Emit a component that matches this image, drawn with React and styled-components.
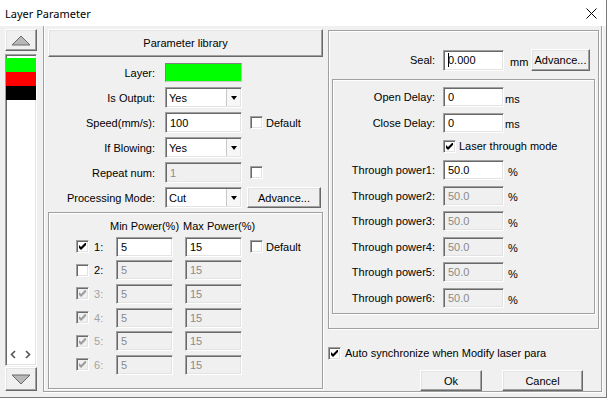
import React from "react";
import styled, { createGlobalStyle } from "styled-components";

const GlobalStyle = createGlobalStyle`
  html, body {
    margin: 0;
    padding: 0;
    background: #ffffff;
  }
  body {
    font-family: "Liberation Sans", Arial, sans-serif;
    font-size: 11px;
    color: #000;
  }
  * {
    box-sizing: border-box;
  }
`;

const Window = styled.div`
  width: 607px;
  height: 398px;
  background: #f0f0f0;
  border-right: 1px solid #7a7a7a;
  border-bottom: 1px solid #7a7a7a;
  display: flex;
  flex-direction: column;
  overflow: hidden;
`;

const TitleBar = styled.div`
  height: 26px;
  flex: none;
  background: #fff;
  display: flex;
  align-items: center;
  justify-content: space-between;
  padding: 0 9px 0 5px;
`;

const TitleText = styled.span`
  font-family: "Noto Sans", "Open Sans", sans-serif;
  font-size: 11px;
`;

const Body = styled.div`
  flex: 1;
  display: flex;
`;

const Sidebar = styled.div`
  width: 43px;
  flex: none;
  display: flex;
  flex-direction: column;
  padding: 3px 0 6px 5px;
`;

const raised = `
  background: #f0f0f0;
  border: 1px solid;
  border-color: #ffffff #696969 #696969 #ffffff;
  box-shadow: inset -1px -1px 0 #a0a0a0, inset 1px 1px 0 #e3e3e3;
`;

const sunken = `
  border: 1px solid;
  border-color: #a0a0a0 #ffffff #ffffff #a0a0a0;
  box-shadow: inset 1px 1px 0 #696969, inset -1px -1px 0 #e3e3e3;
`;

const etched = `
  border: 1px solid #a0a0a0;
  box-shadow: inset 1px 1px 0 #ffffff, 1px 1px 0 #ffffff;
`;

const ArrowButton = styled.div`
  ${raised}
  width: 32px;
  height: ${(p) => p.$h}px;
  flex: none;
  display: flex;
  align-items: center;
  justify-content: center;
`;

const LayerList = styled.div`
  ${sunken}
  background: #fff;
  width: 32px;
  flex: 1;
  margin: 3px 0 1px;
  padding-top: 3px;
  display: flex;
  flex-direction: column;
`;

const LayerSwatch = styled.div`
  height: 14px;
  background: ${(p) => p.$color};
`;

const ScrollArrows = styled.div`
  margin-top: auto;
  height: 12px;
  margin-bottom: 5px;
  display: flex;
  align-items: center;
  gap: 9px;
  padding-left: 4px;
`;

const Panel = styled.div`
  width: 559px;
  height: 366px;
  border-left: 1px solid #a0a0a0;
  border-right: 1px solid #a0a0a0;
  border-bottom: 1px solid #a0a0a0;
  box-shadow: inset 1px 0 0 #fff, 1px 1px 0 #fff;
  padding: 3px 0 0 4px;
  display: flex;
`;

const MiddleColumn = styled.div`
  width: 275px;
  display: flex;
  flex-direction: column;
`;

const RightColumn = styled.div`
  width: 271px;
  margin-left: 5px;
  padding-top: 1px;
  display: flex;
  flex-direction: column;
`;

const Button = styled.button`
  ${raised}
  font: inherit;
  color: #000;
  padding: 0;
  margin: 0;
  width: ${(p) => p.$w}px;
  height: ${(p) => p.$h || 21}px;
  display: flex;
  align-items: center;
  justify-content: center;
  margin-left: ${(p) => p.$ml || 0}px;
`;

const FormGrid = styled.div`
  margin-top: 3px;
  display: grid;
  grid-template-columns: 117px 85px 1fr;
  grid-auto-rows: 25px;
  align-items: center;
`;

const FormLabel = styled.div`
  text-align: right;
  padding-right: 10px;
  white-space: nowrap;
`;

const Field = styled.input`
  ${sunken}
  width: ${(p) => p.$w}px;
  height: ${(p) => p.$h || 21}px;
  padding: 0 0 0 4px;
  margin: 0;
  font: inherit;
  outline: none;
  color: ${(p) => (p.disabled ? "#8a8a8a" : "#000")};
  background: ${(p) => (p.disabled ? "#f0f0f0" : "#fff")};
`;

const ColorBox = styled.div`
  width: 77px;
  height: 19px;
  background: ${(p) => p.$color};
  border: 1px solid;
  border-color: #808080 #c8c8c8 #c8c8c8 #808080;
`;

const ComboBox = styled.div`
  ${sunken}
  background: #fff;
  width: 77px;
  height: 21px;
  display: flex;
  align-items: stretch;
  padding: 1px 1px 1px 3px;
`;

const ComboText = styled.span`
  flex: 1;
  display: flex;
  align-items: center;
`;

const ComboArrow = styled.span`
  width: 14px;
  border-left: 1px solid #c8c8c8;
  background: #f7f7f7;
  display: flex;
  align-items: center;
  justify-content: center;
  &::after {
    content: "";
    border-left: 3.5px solid transparent;
    border-right: 3.5px solid transparent;
    border-top: 4px solid #000;
  }
`;

const CheckLine = styled.div`
  display: flex;
  align-items: center;
  gap: ${(p) => p.$gap ?? 3}px;
  margin-left: ${(p) => p.$ml || 0}px;
  white-space: nowrap;
`;

const Box = styled.span`
  ${sunken}
  width: 13px;
  height: 13px;
  flex: none;
  background: ${(p) => (p.$disabled ? "#f0f0f0" : "#fff")};
  display: flex;
  align-items: center;
  justify-content: center;
`;

const GroupBox = styled.div`
  ${etched}
  margin-top: 2px;
  height: 177px;
`;

const PowerHeader = styled.div`
  height: 22px;
  padding: 6px 0 0 61px;
  line-height: 14px;
  display: flex;
  gap: 4px;
`;

const PowerRow = styled.div`
  height: 23.6px;
  display: grid;
  grid-template-columns: 18px 22px 69px 65px 1fr;
  align-items: center;
  padding-left: 27px;
`;

const RowLabel = styled.span`
  color: ${(p) => (p.$disabled ? "#a3a3a3" : "#000")};
`;

const OuterBox = styled.div`
  ${etched}
  height: 299px;
  display: flex;
  flex-direction: column;
`;

const SealRow = styled.div`
  margin-top: 17px;
  height: 24px;
  display: grid;
  grid-template-columns: 114px 64px 24px 59px;
  align-items: center;
`;

const RightLabel = styled.div`
  text-align: right;
  padding-right: 8px;
  white-space: nowrap;
`;

const Unit = styled.span`
  padding-top: 3px;
  margin-left: ${(p) => p.$ml ?? 3}px;
`;

const InnerBox = styled.div`
  ${etched}
  margin: 7px 3px 0;
  height: 235px;
  padding-top: 4.25px;
  display: flex;
  flex-direction: column;
`;

const InnerRow = styled.div`
  height: ${(p) => p.$h}px;
  flex: none;
  display: grid;
  grid-template-columns: 110px 61px 1fr;
  align-items: center;
`;

const AutoRow = styled.div`
  margin-top: 14px;
  height: 20px;
  display: flex;
  align-items: center;
`;

const ButtonRow = styled.div`
  margin-top: 7px;
  display: flex;
  justify-content: flex-end;
  gap: 20px;
  padding-right: 16px;
`;

const SealWrap = styled.div`
  position: relative;
  width: 61px;
`;

const Caret = styled.span`
  position: absolute;
  left: 5px;
  top: 3px;
  width: 1px;
  height: 14px;
  background: #000;
`;

function Check({ checked, disabled }) {
  return (
    <Box $disabled={disabled}>
      {checked && (
        <svg width="7" height="7" viewBox="0 0 7 7">
          <polygon
            points="0,2 2,4 6,0 7,0 7,2 2,7 0,5"
            fill={disabled ? "#9c9c9c" : "#000"}
          />
        </svg>
      )}
    </Box>
  );
}

function Combo({ value }) {
  return (
    <ComboBox>
      <ComboText>{value}</ComboText>
      <ComboArrow />
    </ComboBox>
  );
}

const powerRows = [
  { n: 1, checked: true, enabled: true },
  { n: 2, checked: false, enabled: false, boxEnabled: true },
  { n: 3, checked: true, enabled: false },
  { n: 4, checked: true, enabled: false },
  { n: 5, checked: true, enabled: false },
  { n: 6, checked: true, enabled: false },
];

export default function App() {
  return (
    <>
      <GlobalStyle />
      <Window>
        <TitleBar>
          <TitleText>Layer Parameter</TitleText>
          <svg width="11" height="11" viewBox="0 0 11 11">
            <path d="M0.5 0.5 L10.5 10.5 M10.5 0.5 L0.5 10.5" stroke="#000" strokeWidth="1" />
          </svg>
        </TitleBar>
        <Body>
          <Sidebar>
            <ArrowButton $h={22}>
              <svg width="20" height="11" viewBox="0 0 20 11">
                <polygon points="1,10 19,10 10,1" fill="#b8b8b8" stroke="#6a6a6a" />
              </svg>
            </ArrowButton>
            <LayerList>
              <LayerSwatch $color="#00ff00" />
              <LayerSwatch $color="#ff0000" />
              <LayerSwatch $color="#000000" />
              <ScrollArrows>
                <svg width="6" height="9" viewBox="0 0 6 9">
                  <polyline points="5,1 1.5,4.5 5,8" fill="none" stroke="#555" strokeWidth="1.6" />
                </svg>
                <svg width="6" height="9" viewBox="0 0 6 9">
                  <polyline points="1,1 4.5,4.5 1,8" fill="none" stroke="#555" strokeWidth="1.6" />
                </svg>
              </ScrollArrows>
            </LayerList>
            <ArrowButton $h={24}>
              <svg width="20" height="11" viewBox="0 0 20 11">
                <polygon points="1,1 19,1 10,10" fill="#b8b8b8" stroke="#6a6a6a" />
              </svg>
            </ArrowButton>
          </Sidebar>
          <Panel>
            <MiddleColumn>
              <Button $w={275} $h={28}>Parameter library</Button>
              <FormGrid>
                <FormLabel>Layer:</FormLabel>
                <ColorBox $color="#00ff00" />
                <span />
                <FormLabel>Is Output:</FormLabel>
                <Combo value="Yes" />
                <span />
                <FormLabel>Speed(mm/s):</FormLabel>
                <Field $w={77} readOnly value="100" />
                <CheckLine>
                  <Check />
                  <span>Default</span>
                </CheckLine>
                <FormLabel>If Blowing:</FormLabel>
                <Combo value="Yes" />
                <span />
                <FormLabel>Repeat num:</FormLabel>
                <Field $w={77} disabled value="1" />
                <CheckLine>
                  <Check />
                </CheckLine>
                <FormLabel>Processing Mode:</FormLabel>
                <Combo value="Cut" />
                <Button $w={74} $ml={-3}>
                  Advance...
                </Button>
              </FormGrid>
              <GroupBox>
                <PowerHeader>
                  <span>Min Power(%)</span>
                  <span>Max Power(%)</span>
                </PowerHeader>
                {powerRows.map((r) => (
                  <PowerRow key={r.n}>
                    <Check checked={r.checked} disabled={!r.enabled && !r.boxEnabled} />
                    <RowLabel $disabled={!r.enabled && !r.boxEnabled}>{r.n}:</RowLabel>
                    <Field $w={57} $h={20} disabled={!r.enabled} readOnly value="5" />
                    <Field $w={57} $h={20} disabled={!r.enabled} readOnly value="15" />
                    {r.n === 1 ? (
                      <CheckLine>
                        <Check />
                        <span>Default</span>
                      </CheckLine>
                    ) : (
                      <span />
                    )}
                  </PowerRow>
                ))}
              </GroupBox>
            </MiddleColumn>
            <RightColumn>
              <OuterBox>
                <SealRow>
                  <RightLabel>Seal:</RightLabel>
                  <SealWrap>
                    <Field $w={61} readOnly value="0.000" />
                    <Caret />
                  </SealWrap>
                  <Unit>mm</Unit>
                  <Button $w={59} $h={22}>
                    Advance...
                  </Button>
                </SealRow>
                <InnerBox>
                  <InnerRow $h={25.5}>
                    <RightLabel>Open Delay:</RightLabel>
                    <Field $w={61} $h={20} readOnly value="0" />
                    <Unit $ml={1}>ms</Unit>
                  </InnerRow>
                  <InnerRow $h={25.5}>
                    <RightLabel>Close Delay:</RightLabel>
                    <Field $w={61} $h={20} readOnly value="0" />
                    <Unit $ml={1}>ms</Unit>
                  </InnerRow>
                  <InnerRow $h={22}>
                    <span />
                    <CheckLine>
                      <Check checked />
                      <span>Laser through mode</span>
                    </CheckLine>
                  </InnerRow>
                  {[1, 2, 3, 4, 5, 6].map((n) => (
                    <InnerRow key={n} $h={25.6}>
                      <RightLabel>Through power{n}:</RightLabel>
                      <Field $w={61} $h={20} disabled={n !== 1} readOnly value="50.0" />
                      <Unit $ml={4}>%</Unit>
                    </InnerRow>
                  ))}
                </InnerBox>
              </OuterBox>
              <AutoRow>
                <CheckLine $gap={4}>
                  <Check checked />
                  <span>Auto synchronize when Modify laser para</span>
                </CheckLine>
              </AutoRow>
              <ButtonRow>
                <Button $w={62}>Ok</Button>
                <Button $w={81}>Cancel</Button>
              </ButtonRow>
            </RightColumn>
          </Panel>
        </Body>
      </Window>
    </>
  );
}
